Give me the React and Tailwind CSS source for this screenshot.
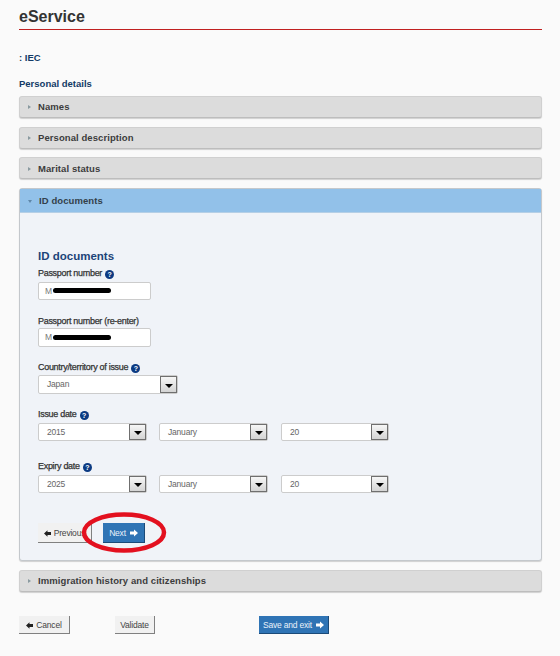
import React from "react";

const Help = () => (
  <span className="inline-flex items-center justify-center w-[9px] h-[9px] rounded-full bg-[#0b3a82] text-white text-[7px] leading-none font-bold ml-[3px] [-webkit-text-stroke:0]">
    ?
  </span>
);

const Label = ({ text, help, className = "" }) => (
  <div className={`flex items-center h-[12px] pt-[2px] text-[9px] text-[#333333] tracking-[-0.3px] [-webkit-text-stroke:0.25px_#333333] ${className}`}>
    {text}
    {help && <Help />}
  </div>
);

const Caret = () => (
  <span className="w-[17px] h-full shrink-0 border-[1.5px] border-[#6f6f6f] bg-gradient-to-b from-[#f6f6f6] to-[#d4d4d4] flex items-center justify-center">
    <span className="w-0 h-0 mt-[2px] border-x-[4px] border-x-transparent border-t-[4px] border-t-black" />
  </span>
);

const Select = ({ value, className = "" }) => (
  <div className={`flex items-center bg-white border border-[#cccccc] rounded-[2px] text-[8.5px] text-[#666666] tracking-[-0.2px] ${className}`}>
    <span className="flex-1 pl-[8px]">{value}</span>
    <Caret />
  </div>
);

const Masked = ({ className = "" }) => (
  <div className={`relative w-[113px] bg-white border border-[#cccccc] rounded-[2px] flex items-center pl-[6px] text-[8.5px] text-[#777777] ${className}`}>
    M
    <span className="absolute left-[14px] right-[39px] top-1/2 -mt-[3px] h-[5px] rounded-full bg-black" />
  </div>
);

const Section = ({ title, className = "" }) => (
  <div className={`h-[22px] rounded-[3px] bg-[#dcdcdc] border border-[#d0d0d0] border-b-[#bdbdbd] shadow-[0_1px_1px_#d0d0d0] flex items-center text-[#3c3c3c] ${className}`}>
    <span className="ml-[8px] w-0 h-0 border-y-[2px] border-y-transparent border-l-[3px] border-l-[#8a9aa0]" />
    <span className="ml-[7px] text-[9.5px] font-bold tracking-[0.08px]">{title}</span>
  </div>
);

const ArrowLeft = () => (
  <svg width="7" height="7" viewBox="0 0 10 10" className="mr-[3px]">
    <path d="M0 5 L5 0.5 V3 H10 V7 H5 V9.5 Z" fill="#222222" />
  </svg>
);

const ArrowRight = () => (
  <svg width="8" height="8" viewBox="0 0 10 10" className="ml-[4px]">
    <path d="M10 5 L5 0.5 V3 H0 V7 H5 V9.5 Z" fill="#ffffff" />
  </svg>
);

const GreyButton = ({ children, className = "" }) => (
  <div className={`flex items-center justify-center pt-[1px] bg-[#f1f1f1] border-r border-b border-[#808080] text-[8.5px] text-[#444444] tracking-[-0.2px] ${className}`}>
    {children}
  </div>
);

const BlueButton = ({ children, className = "" }) => (
  <div className={`flex items-center justify-center pt-[1px] bg-[#2f74b5] border-r border-b border-[#1b4a78] text-[8.5px] text-[#eaf2fa] tracking-[-0.2px] ${className}`}>
    {children}
  </div>
);

const DateRow = ({ year }) => (
  <div className="flex h-[18px] mt-[3px]">
    <Select value={year} className="w-[109px]" />
    <Select value="January" className="w-[109px] ml-[12px]" />
    <Select value="20" className="w-[108px] ml-[13px]" />
  </div>
);

export default function App() {
  return (
    <div className="relative w-[560px] h-[656px] overflow-hidden bg-[#fafafa] font-['Liberation_Sans',Arial,sans-serif]">
      <div className="w-[523px] ml-[19px]">
        <h1 className="h-[29px] pt-[7px] text-[16px] leading-[20px] font-bold text-[#333333]">eService</h1>
        <div className="h-px bg-[#c02020]" />

        <div className="mt-[22px] text-[9.5px] leading-[12px] font-bold text-[#123a66]">: IEC</div>
        <div className="mt-[14px] text-[9.5px] leading-[12px] font-bold text-[#123a66]">Personal details</div>

        <div className="mt-[6px]">
          <Section title="Names" />
          <Section title="Personal description" className="mt-[9px]" />
          <Section title="Marital status" className="mt-[8px] pt-[2px]" />
        </div>

        <div className="mt-[9px] h-[373px] rounded-[3px] border border-[#c4c8cc] shadow-[0_1px_1px_#d0d0d0] bg-[#f0f3f8] flex flex-col">
          <div className="h-[24px] shrink-0 pt-[1px] bg-[#92c1e9] border-b border-[#b5cfe6] flex items-center text-[#333f4a]">
            <span className="ml-[8px] w-0 h-0 border-x-[2px] border-x-transparent border-t-[3px] border-t-[#5f87a8]" />
            <span className="ml-[7px] text-[9.5px] font-bold tracking-[0.08px]">ID documents</span>
          </div>

          <div className="pl-[18px]">
            <h2 className="mt-[36px] text-[11.5px] leading-[14px] font-bold text-[#1d4478]">ID documents</h2>
            <Label text="Passport number" help className="mt-[4px]" />
            <Masked className="h-[18px] mt-[3px]" />
            <Label text="Passport number (re-enter)" className="mt-[15px]" />
            <Masked className="h-[19px] mt-[1px]" />
            <Label text="Country/territory of issue" help className="mt-[14px]" />
            <Select value="Japan" className="w-[140px] h-[19px] mt-[2px]" />
            <Label text="Issue date" help className="mt-[14px]" />
            <DateRow year="2015" />
            <Label text="Expiry date" help className="mt-[19px]" />
            <DateRow year="2025" />

            <div className="flex mt-[30px] h-[20px]">
              <GreyButton className="w-[54px]">
                <ArrowLeft />
                Previous
              </GreyButton>
              <BlueButton className="w-[42px] ml-[11px]">
                Next
                <ArrowRight />
              </BlueButton>
            </div>
          </div>
        </div>

        <Section title="Immigration history and citizenships" className="mt-[9px]" />

        <div className="flex h-[18px] mt-[24px]">
          <GreyButton className="w-[51px]">
            <ArrowLeft />
            Cancel
          </GreyButton>
          <GreyButton className="w-[40px] ml-[45px]">Validate</GreyButton>
          <BlueButton className="w-[70px] ml-[104px]">
            Save and exit
            <ArrowRight />
          </BlueButton>
        </div>
      </div>

      {/* red marker circle drawn over the Next button */}
      <svg className="absolute left-[78px] top-[507px]" width="92" height="50" viewBox="0 0 92 50">
        <ellipse cx="46" cy="25.5" rx="40" ry="18" fill="none" stroke="#e3101f" strokeWidth="4.5" />
      </svg>
    </div>
  );
}
